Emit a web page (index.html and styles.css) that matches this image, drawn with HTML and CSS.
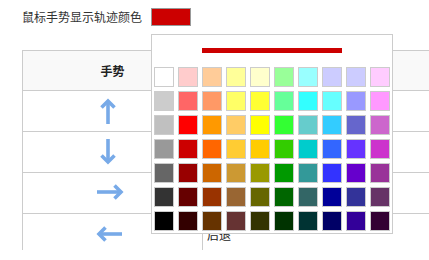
FILE: index.html
```html
<!DOCTYPE html>
<html lang="zh-CN">
<head>
<meta charset="utf-8">
<title>鼠标手势</title>
<link rel="stylesheet" href="styles.css">
</head>
<body>
<div class="page">
  <div class="setting">
    <span class="label">鼠标手势显示轨迹颜色</span>
    <span class="swatch-btn"></span>
  </div>
  <div class="table-wrap">
    <div class="tbl">
      <div class="cell head">手势</div>
      <div class="cell head">动作</div>

      <div class="cell icon">
        <svg class="arrow" viewBox="0 0 26 26" width="26" height="26"><path d="M11 3 V26" /><polyline points="4.5,9.5 11,3 17.5,9.5" /></svg>
      </div>
      <div class="cell text">向上滚动</div>

      <div class="cell icon">
        <svg class="arrow" viewBox="0 0 26 26" width="26" height="26"><path d="M11 0 V23" /><polyline points="4.5,16.5 11,23 17.5,16.5" /></svg>
      </div>
      <div class="cell text">向下滚动</div>

      <div class="cell icon">
        <svg class="arrow" viewBox="0 0 26 26" width="26" height="26"><path d="M0 12 H24" /><polyline points="17.5,5.5 24,12 17.5,18.5" /></svg>
      </div>
      <div class="cell text">前进</div>

      <div class="cell icon">
        <svg class="arrow" viewBox="0 0 26 26" width="26" height="26"><path d="M2 13 H25" /><polyline points="8.5,6.5 2,13 8.5,19.5" /></svg>
      </div>
      <div class="cell text">后退</div>
    </div>
  </div>

  <div class="picker">
    <div class="preview"></div>
    <div class="palette">
      <span class="sw" style="background:#ffffff"></span><span class="sw" style="background:#ffcccc"></span><span class="sw" style="background:#ffcc99"></span><span class="sw" style="background:#ffff99"></span><span class="sw" style="background:#ffffcc"></span><span class="sw" style="background:#99ff99"></span><span class="sw" style="background:#99ffff"></span><span class="sw" style="background:#ccccff"></span><span class="sw" style="background:#ccccff"></span><span class="sw" style="background:#ffccff"></span>
      <span class="sw" style="background:#cccccc"></span><span class="sw" style="background:#ff6666"></span><span class="sw" style="background:#ff9966"></span><span class="sw" style="background:#ffff66"></span><span class="sw" style="background:#ffff33"></span><span class="sw" style="background:#66ff99"></span><span class="sw" style="background:#33ffff"></span><span class="sw" style="background:#66ffff"></span><span class="sw" style="background:#9999ff"></span><span class="sw" style="background:#ff99ff"></span>
      <span class="sw" style="background:#c0c0c0"></span><span class="sw" style="background:#ff0000"></span><span class="sw" style="background:#ff9900"></span><span class="sw" style="background:#ffcc66"></span><span class="sw" style="background:#ffff00"></span><span class="sw" style="background:#33ff33"></span><span class="sw" style="background:#66cccc"></span><span class="sw" style="background:#33ccff"></span><span class="sw" style="background:#6666cc"></span><span class="sw" style="background:#cc66cc"></span>
      <span class="sw" style="background:#999999"></span><span class="sw" style="background:#cc0000"></span><span class="sw" style="background:#ff6600"></span><span class="sw" style="background:#ffcc33"></span><span class="sw" style="background:#ffcc00"></span><span class="sw" style="background:#33cc00"></span><span class="sw" style="background:#00cccc"></span><span class="sw" style="background:#3366ff"></span><span class="sw" style="background:#6633ff"></span><span class="sw" style="background:#cc33cc"></span>
      <span class="sw" style="background:#666666"></span><span class="sw" style="background:#990000"></span><span class="sw" style="background:#cc6600"></span><span class="sw" style="background:#cc9933"></span><span class="sw" style="background:#999900"></span><span class="sw" style="background:#009900"></span><span class="sw" style="background:#339999"></span><span class="sw" style="background:#3333ff"></span><span class="sw" style="background:#6600cc"></span><span class="sw" style="background:#993399"></span>
      <span class="sw" style="background:#333333"></span><span class="sw" style="background:#660000"></span><span class="sw" style="background:#993300"></span><span class="sw" style="background:#996633"></span><span class="sw" style="background:#666600"></span><span class="sw" style="background:#006600"></span><span class="sw" style="background:#336666"></span><span class="sw" style="background:#000099"></span><span class="sw" style="background:#333399"></span><span class="sw" style="background:#663366"></span>
      <span class="sw" style="background:#000000"></span><span class="sw" style="background:#330000"></span><span class="sw" style="background:#663300"></span><span class="sw" style="background:#663333"></span><span class="sw" style="background:#333300"></span><span class="sw" style="background:#003300"></span><span class="sw" style="background:#003333"></span><span class="sw" style="background:#000066"></span><span class="sw" style="background:#330099"></span><span class="sw" style="background:#330033"></span>
    </div>
  </div>
</div>
</body>
</html>
```

FILE: styles.css
```css
html, body {
  margin: 0;
  padding: 0;
  background: #ffffff;
  overflow: hidden;
}

body {
  font-family: "Noto Sans CJK SC", "Noto Sans", sans-serif;
  font-size: 12px;
  color: #333333;
}

.page {
  position: relative;
  width: 429px;
  height: 260px;
  overflow: hidden;
}

.setting {
  display: flex;
  align-items: center;
  padding: 8px 0 0 22px;
  height: 18px;
}

.label {
  width: 129px;
  line-height: 18px;
  color: #333333;
}

.swatch-btn {
  display: block;
  width: 38px;
  height: 16px;
  border: 1px solid #999999;
  background: #cc0000;
}

.table-wrap {
  margin: 24px 0 0 22px;
  height: 200px;
  overflow: hidden;
}

.tbl {
  display: grid;
  grid-template-columns: 180px 1fr;
  grid-auto-rows: 41px;
  grid-template-rows: 40px;
  width: 440px;
  border-top: 1px solid #cccccc;
  border-left: 1px solid #cccccc;
}

.cell {
  box-sizing: border-box;
  border-right: 1px solid #cccccc;
  border-bottom: 1px solid #cccccc;
  display: flex;
  align-items: center;
}

.head {
  background: #f9f9f9;
  justify-content: center;
  font-weight: bold;
  color: #222222;
}

.icon {
  justify-content: center;
  padding-right: 5px;
}

.text {
  padding-left: 4px;
  color: #222222;
}

.arrow {
  display: block;
  overflow: visible;
  fill: none;
  stroke: #78aae8;
  stroke-width: 3.6;
  stroke-linejoin: miter;
}

.picker {
  position: absolute;
  left: 151px;
  top: 34px;
  width: 240px;
  height: 198px;
  border: 1px solid #cccccc;
  background: #ffffff;
}

.preview {
  width: 140px;
  height: 5px;
  margin: 13px auto 0;
  background: #cc0000;
}

.palette {
  display: flex;
  flex-wrap: wrap;
  width: 240px;
  margin-top: 12px;
}

.sw {
  display: block;
  box-sizing: border-box;
  width: 20px;
  height: 20px;
  margin: 2px;
  border: 1px solid #cccccc;
}
```
